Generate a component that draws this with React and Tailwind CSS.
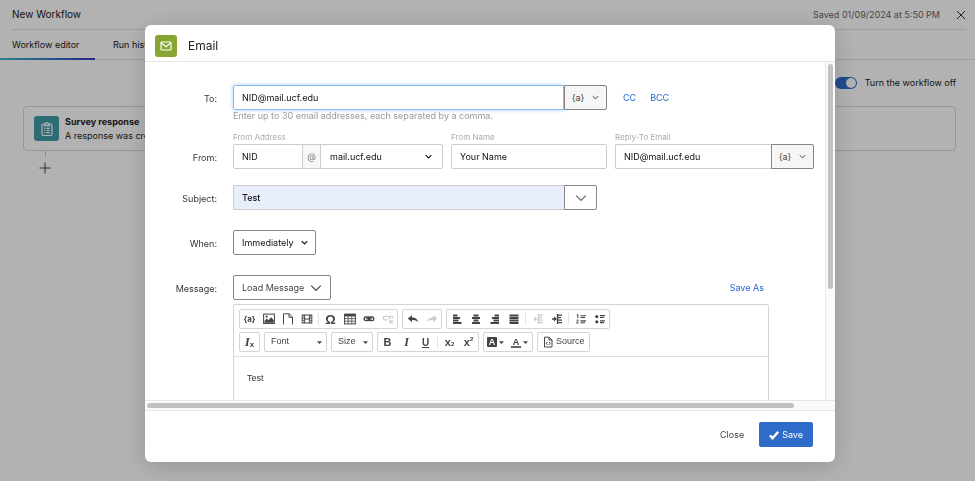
import { useState } from "react";

/* -------------------------------------------------------------------------- */
/*                                   icons                                    */
/* -------------------------------------------------------------------------- */

function Chevron({ className = "w-2 h-2", width = 1.6 }) {
  return (
    <svg className={`shrink-0 ${className}`} viewBox="0 0 10 10" fill="none" stroke="currentColor" strokeWidth={width}>
      <path d="M1 3l4 4 4-4" />
    </svg>
  );
}

function Caret({ className = "" }) {
  return (
    <svg className={`w-[5px] h-[5px] shrink-0 ${className}`} viewBox="0 0 8 8" fill="currentColor">
      <path d="M0 2h8L4 6.500z" />
    </svg>
  );
}

function Glyph({ children }) {
  return (
    <svg className="w-3 h-3" viewBox="0 0 12 12" fill="none" stroke="currentColor">
      {children}
    </svg>
  );
}

const icons = {
  image: (
    <Glyph>
      <rect x="0.6" y="1.1" width="10.8" height="9.4" />
      <path d="M1.5 9.8V8l2.3-2.4 1.8 1.6 2.6-3 2.5 3v2.6z" fill="currentColor" stroke="none" />
      <circle cx="3.6" cy="3.6" r="1.1" fill="currentColor" stroke="none" />
    </Glyph>
  ),
  file: (
    <Glyph>
      <path d="M1.5 11.5V.8h5.700l3.300 3.300v7.400M7 .8v3.500h3.500" />
    </Glyph>
  ),
  video: (
    <Glyph>
      <rect x="1.2" y="2" width="9.6" height="8" />
      <path d="M3.6 2v8M8.4 2v8M3.6 6h4.8" />
      <path d="M2.4 2.5v7M9.6 2.5v7" strokeDasharray="1.2 1" />
    </Glyph>
  ),
  table: (
    <Glyph>
      <rect x="0.6" y="1.1" width="10.8" height="9.8" />
      <path d="M.6 2.2h10.8" strokeWidth="2.4" />
      <path d="M.6 5.6h10.8M.6 8.2h10.8M4.2 3v8M7.8 3v8" strokeWidth="0.8" />
    </Glyph>
  ),
  link: (
    <Glyph>
      <rect x="1.2" y="4" width="5.4" height="3.6" rx="1.7" strokeWidth="1.4" />
      <rect x="5.4" y="4" width="5.4" height="3.6" rx="1.7" strokeWidth="1.4" />
      <path d="M3.2 5.8h5.6" strokeWidth="1.4" />
    </Glyph>
  ),
  unlink: (
    <Glyph>
      <path
        d="M5.5 6.8H3a1.7 1.7 0 0 1 0-3.4h3.4M6 5.1h3M7 3.4h2.500a1.6 1.6 0 0 1 1.500 1.600M7.2 7l3.6 3.6M10.8 7L7.2 10.6"
        strokeWidth="1.2"
      />
    </Glyph>
  ),
  undo: (
    <Glyph>
      <path d="M.8 5.6L5 2.2v2.2c3.6 0 5.6 1.6 6.2 5C9.8 7.5 8 6.9 5 7v2.2z" fill="currentColor" stroke="none" />
    </Glyph>
  ),
  redo: (
    <Glyph>
      <path d="M11.2 5.6L7 2.2v2.2C3.4 4.4 1.4 6 .8 9.4 2.2 7.5 4 6.9 7 7v2.2z" fill="currentColor" stroke="none" />
    </Glyph>
  ),
  alignLeft: (
    <Glyph>
      <path d="M2 2.5h4.5M2 5h7M2 7.5h5.5M2 10h8.5" strokeWidth="1.9" />
    </Glyph>
  ),
  alignCenter: (
    <Glyph>
      <path d="M3.500 2.500h5M2 5h8M3.500 7.500h5M2 10h8" strokeWidth="1.9" />
    </Glyph>
  ),
  alignRight: (
    <Glyph>
      <path d="M5.500 2.500h4.500M3 5h7M4.500 7.500h5.500M1.500 10h8.500" strokeWidth="1.9" />
    </Glyph>
  ),
  justify: (
    <Glyph>
      <path d="M1.500 2.500h9M1.500 5h9M1.500 7.500h9M1.500 10h9" strokeWidth="1.9" />
    </Glyph>
  ),
  outdent: (
    <Glyph>
      <path d="M6.5 1v10M7 2.2h4M7 4.7h3M7 7.2h4M7 9.7h4M3.5 6H6" strokeWidth="1.2" />
      <path d="M4.2 3.6L1.2 6l3 2.4z" fill="currentColor" stroke="none" />
    </Glyph>
  ),
  indent: (
    <Glyph>
      <path d="M6.5 1v10M7 2.2h4M7 4.7h3M7 7.2h4M7 9.7h4M1 6h2.5" strokeWidth="1.3" />
      <path d="M3 3.6L6 6 3 8.4z" fill="currentColor" stroke="none" />
    </Glyph>
  ),
  bullets: (
    <Glyph>
      <path d="M6 2.7h5M6 4.5h4M6 7.9h5M6 9.7h4" strokeWidth="1.2" />
      <circle cx="2.8" cy="3.6" r="1.6" fill="currentColor" stroke="none" />
      <circle cx="2.8" cy="8.8" r="1.6" fill="currentColor" stroke="none" />
    </Glyph>
  ),
  numbers: (
    <Glyph>
      <path d="M5.5 2.7h5.5M5.5 4.5h4.5M5.5 7.9h5.5M5.5 9.7h4.5" strokeWidth="1.1" />
      <path d="M1.8 2l1-.6v3.6M1.5 7.4c.6-.8 2-.5 1.8.4-.1.7-1.5 1.3-1.8 2.2h2" strokeWidth="1" />
    </Glyph>
  ),
  source: (
    <Glyph>
      <path d="M2.5 11V1.2h4.7L10 4v7zM7 1.2V4h3" />
      <path d="M5.4 5.9L4.2 7.3l1.2 1.5M7 5.9l1.2 1.4L7 8.8" />
    </Glyph>
  ),
};

/* -------------------------------------------------------------------------- */
/*                                  helpers                                   */
/* -------------------------------------------------------------------------- */

const inputBase = "h-full w-full min-w-0 px-2 outline-none";

function Field({ label, htmlFor, className = "", children }) {
  return (
    <div className={`flex items-end gap-4 ${className}`}>
      <label htmlFor={htmlFor} className="w-[72px] shrink-0 text-right text-[#333] h-[25px] leading-[27px]">
        {label}
      </label>
      <div className="flex-1 min-w-0">{children}</div>
    </div>
  );
}

function PipedTextButton() {
  return (
    <button
      type="button"
      aria-label="Insert piped text"
      className="w-[43px] shrink-0 flex items-center justify-center gap-2 border border-[#858585] bg-[#f6f6f6] rounded-r-xs text-[#444]"
    >
      {"{a}"}
      <Chevron className="w-[7px] h-[7px]" width={1.4} />
    </button>
  );
}

function Group({ children }) {
  return <div className="flex items-center h-5 border border-[#d4d4d4] rounded-xs">{children}</div>;
}

function Tool({ label, className = "", children }) {
  return (
    <button
      type="button"
      aria-label={label}
      className={`min-w-[19px] h-full flex items-center justify-center ${className}`}
    >
      {children}
    </button>
  );
}

function Separator() {
  return <span className="w-px h-3 mx-[2px] bg-[#e2e2e2]" />;
}

function Toolbar() {
  return (
    <div className="flex flex-col gap-[3px] px-[5px] py-1 border-b border-[#ddd] text-[#444]">
      <div className="flex gap-1">
        <Group>
          <Tool label="Piped text" className="text-[8px] font-bold">{"{a}"}</Tool>
          <Tool label="Image">{icons.image}</Tool>
          <Tool label="File">{icons.file}</Tool>
          <Tool label="Video">{icons.video}</Tool>
          <Separator />
          <Tool label="Special character" className="text-[13px] font-bold leading-none font-['Liberation_Sans',sans-serif]">Ω</Tool>
          <Tool label="Table">{icons.table}</Tool>
          <Tool label="Link">{icons.link}</Tool>
          <Tool label="Unlink" className="text-[#ccc]">{icons.unlink}</Tool>
        </Group>
        <Group>
          <Tool label="Undo">{icons.undo}</Tool>
          <Tool label="Redo" className="text-[#ccc]">{icons.redo}</Tool>
        </Group>
        <Group>
          <Tool label="Align left">{icons.alignLeft}</Tool>
          <Tool label="Center">{icons.alignCenter}</Tool>
          <Tool label="Align right">{icons.alignRight}</Tool>
          <Tool label="Justify">{icons.justify}</Tool>
          <Separator />
          <Tool label="Decrease indent" className="text-[#ccc]">{icons.outdent}</Tool>
          <Tool label="Increase indent">{icons.indent}</Tool>
          <Separator />
          <Tool label="Numbered list">{icons.numbers}</Tool>
          <Tool label="Bulleted list">{icons.bullets}</Tool>
        </Group>
      </div>

      <div className="flex gap-1 font-['Liberation_Sans',sans-serif]">
        <Group>
          <Tool label="Remove format" className="font-['Liberation_Serif',serif] text-[13px] font-bold italic">
            I<sub className="text-[8px] not-italic font-['Liberation_Sans',sans-serif] bottom-[-3px]">x</sub>
          </Tool>
        </Group>
        <Group>
          <span className="relative flex items-center">
            <select aria-label="Font" className="appearance-none w-[61px] pl-1.5 text-[9px] outline-none">
              <option>Font</option>
            </select>
            <Caret className="absolute right-1 pointer-events-none" />
          </span>
        </Group>
        <Group>
          <span className="relative flex items-center">
            <select aria-label="Size" className="appearance-none w-10 pl-1.5 text-[9px] outline-none">
              <option>Size</option>
            </select>
            <Caret className="absolute right-1 pointer-events-none" />
          </span>
        </Group>
        <Group>
          <Tool label="Bold" className="text-[11px] font-bold">B</Tool>
          <Tool label="Italic" className="text-[12px] font-bold italic font-['Liberation_Serif',serif]">I</Tool>
          <Tool label="Underline" className="text-[10px] font-bold underline">U</Tool>
          <Separator />
          <Tool label="Subscript" className="text-[11px] font-bold">
            x<sub className="text-[6px]">2</sub>
          </Tool>
          <Tool label="Superscript" className="text-[11px] font-bold">
            x<sup className="text-[6px]">2</sup>
          </Tool>
        </Group>
        <Group>
          <Tool label="Background color" className="gap-[2px] px-[3px] text-[9px] font-bold">
            <span className="bg-[#444] text-white w-[10px] h-[10px] leading-[10px] rounded-[1px]">A</span>
            <Caret />
          </Tool>
          <Tool label="Text color" className="gap-[2px] px-1 text-[9px] font-bold">
            <span className="w-[10px] h-[11px] leading-[10px] border-b-2 border-[#666]">A</span>
            <Caret />
          </Tool>
        </Group>
        <Group>
          <Tool label="Source" className="gap-[2px] px-1 text-[9px]">
            {icons.source}
            Source
          </Tool>
        </Group>
      </div>
    </div>
  );
}

/* -------------------------------------------------------------------------- */
/*                                   page                                     */
/* -------------------------------------------------------------------------- */

function WorkflowPage() {
  return (
    <div className="min-h-screen bg-white text-[#222]">
      <header className="flex items-center justify-between h-[30px] ml-3 mr-[9px] border-b border-[#e2e2e2]">
        <h1 className="text-[10px]">New Workflow</h1>
        <div className="flex items-center gap-4 text-[#666]">
          <span>Saved 01/09/2024 at 5:50 PM</span>
          <button type="button" aria-label="Close workflow">
            <svg className="w-[10px] h-[10px]" viewBox="0 0 10 10" stroke="#333" fill="none">
              <path d="M1 1l8 8M9 1L1 9" />
            </svg>
          </button>
        </div>
      </header>

      <nav className="flex h-[30px] border-b border-[#e2e2e2]">
        <a href="#editor" className="relative w-[95px] pl-3 leading-[30px]">
          Workflow editor
          <span className="absolute left-0 -bottom-px w-full h-[2px] bg-linear-to-r from-[#3bb8c8] to-[#3b2fc0]" />
        </a>
        <a href="#history" className="pl-[18px] leading-[30px]">Run history</a>
      </nav>

      <div className="pl-[23px] pr-[19px] pt-4">
        <label className="flex items-center justify-end gap-2 h-[14px]">
          <input type="checkbox" defaultChecked className="peer sr-only" />
          <span className="w-[22px] h-3 p-px flex justify-end rounded-full bg-[#2f6bd0]">
            <span className="w-[10px] h-[10px] rounded-full bg-white" />
          </span>
          Turn the workflow off
        </label>

        <div className="mt-4 h-[45px] flex items-center gap-[6px] pl-[10px] border border-[#d6d6d6] rounded-[4px]">
          <span className="w-[25px] h-[25px] shrink-0 flex items-center justify-center rounded-[3px] bg-[#419ba8] text-white">
            <svg className="w-4 h-4" viewBox="0 0 16 16" fill="none" stroke="currentColor" strokeWidth="1.2">
              <path d="M5.5 3H4.2C3.5 3 3 3.5 3 4.2v9.1c0 .7.5 1.2 1.2 1.2h7.6c.7 0 1.2-.5 1.2-1.2V4.2c0-.7-.5-1.2-1.2-1.2h-1.3" />
              <path d="M5.5 4.6V2.8h1.3a1.2 1.2 0 0 1 2.4 0h1.3v1.8zM7.3 7.3h3.4M7.3 9.5h3.4M7.3 11.7h3.4M5.2 7.3h1M5.2 9.5h1M5.2 11.7h1" />
            </svg>
          </span>
          <div className="leading-[14px]">
            <p className="font-bold">Survey response</p>
            <p>A response was created</p>
          </div>
        </div>

        <div className="w-11 flex flex-col items-center gap-[5px]">
          <span className="w-px h-[6px] bg-[#ccc]" />
          <button type="button" aria-label="Add step">
            <svg className="w-3 h-3" viewBox="0 0 12 12" stroke="#444" fill="none">
              <path d="M6 .5v11M.5 6h11" />
            </svg>
          </button>
        </div>
      </div>
    </div>
  );
}

function EmailForm() {
  const [to, setTo] = useState("NID@mail.ucf.edu");
  const [fromUser, setFromUser] = useState("NID");
  const [fromName, setFromName] = useState("Your Name");
  const [replyTo, setReplyTo] = useState("NID@mail.ucf.edu");
  const [subject, setSubject] = useState("Test");

  return (
    <form className="pt-[23px] pr-[11px] text-[#111]">
      {/* To */}
      <Field label="To:" htmlFor="to">
        <div className="grid grid-cols-[374fr_191fr] gap-4 items-center">
          <div className="flex h-[25px]">
            <input
              id="to"
              type="text"
              value={to}
              onChange={(e) => setTo(e.target.value)}
              className={`${inputBase} border border-[#8abaf0] rounded-l-xs shadow-[0_0_4px_#a9cdf5]`}
            />
            <PipedTextButton />
          </div>
          <div className="flex gap-[14px] text-[#2667d2]">
            <button type="button">CC</button>
            <button type="button">BCC</button>
          </div>
        </div>
      </Field>
      <p className="ml-[88px] h-[13px] leading-[12px] text-[#999]">
        Enter up to 30 email addresses, each separated by a comma.
      </p>

      {/* From */}
      <Field label="From:" htmlFor="from-user" className="mt-2">
        <div className="grid grid-cols-[210fr_156fr_199fr] gap-2">
          <div>
            <label htmlFor="from-user" className="block text-[8px] leading-[12px] pb-px text-[#aaa]">From Address</label>
            <div className="flex h-[25px] border border-[#ccc] rounded-xs">
              <input
                id="from-user"
                type="text"
                value={fromUser}
                onChange={(e) => setFromUser(e.target.value)}
                className="w-[68px] px-2 outline-none"
              />
              <span className="w-[19px] shrink-0 flex items-center justify-center border-x border-[#ccc] bg-[#f7f7f7] text-[#777]">@</span>
              <span className="relative flex-1 flex items-center">
                <select aria-label="From domain" className="appearance-none w-full h-full px-[9px] outline-none">
                  <option>mail.ucf.edu</option>
                </select>
                <Chevron className="absolute right-[10px] w-[7px] h-[7px] pointer-events-none" />
              </span>
            </div>
          </div>
          <div>
            <label htmlFor="from-name" className="block text-[8px] leading-[12px] pb-px text-[#aaa]">From Name</label>
            <div className="h-[25px]">
              <input
                id="from-name"
                type="text"
                value={fromName}
                onChange={(e) => setFromName(e.target.value)}
                className={`${inputBase} border border-[#ccc] rounded-xs`}
              />
            </div>
          </div>
          <div>
            <label htmlFor="reply-to" className="block text-[8px] leading-[12px] pb-px text-[#aaa]">Reply-To Email</label>
            <div className="flex h-[25px]">
              <input
                id="reply-to"
                type="text"
                value={replyTo}
                onChange={(e) => setReplyTo(e.target.value)}
                className={`${inputBase} border border-r-0 border-[#ccc] rounded-l-xs`}
              />
              <PipedTextButton />
            </div>
          </div>
        </div>
      </Field>

      {/* Subject */}
      <Field label="Subject:" htmlFor="subject" className="mt-4">
        <div className="grid grid-cols-[364fr_217fr]">
          <div className="flex h-[25px]">
            <input
              id="subject"
              type="text"
              value={subject}
              onChange={(e) => setSubject(e.target.value)}
              className={`${inputBase} border border-r-0 border-[#ccc] rounded-l-xs bg-[#e8eefc] font-medium`}
            />
            <button
              type="button"
              aria-label="Subject options"
              className="w-[33px] shrink-0 flex items-center justify-center border border-[#858585] rounded-r-xs text-[#666]"
            >
              <Chevron className="w-3 h-3" width={1} />
            </button>
          </div>
        </div>
      </Field>

      {/* When */}
      <Field label="When:" htmlFor="when" className="mt-5">
        <span className="relative inline-flex items-center align-top">
          <select
            id="when"
            className="appearance-none h-[25px] w-[83px] px-2 border border-[#858585] rounded-xs outline-none"
          >
            <option>Immediately</option>
          </select>
          <Chevron className="absolute right-2 w-[7px] h-[7px] pointer-events-none" />
        </span>
      </Field>

      {/* Message */}
      <Field label="Message:" htmlFor="load-message" className="mt-5">
        <div className="flex items-center justify-between pr-[50px]">
          <button
            id="load-message"
            type="button"
            className="h-[25px] w-[98px] px-2 flex items-center justify-between border border-[#858585] rounded-xs text-[#444]"
          >
            Load Message
            <Chevron className="w-3 h-3" width={1} />
          </button>
          <button type="button" className="text-[#2667d2]">Save As</button>
        </div>
      </Field>

      <div className="ml-[88px] mr-[45px] mt-1 border border-[#d4d4d4] rounded-xs">
        <Toolbar />
        <div
          contentEditable
          suppressContentEditableWarning
          role="textbox"
          aria-label="Message body"
          className="h-40 px-[13px] pt-[14px] text-[9px] leading-[14px] text-[#333] font-['Liberation_Sans',sans-serif] outline-none"
        >
          Test
        </div>
      </div>
    </form>
  );
}

function EmailDialog() {
  return (
    <div
      role="dialog"
      aria-label="Email"
      className="flex-1 min-w-0 flex flex-col bg-white rounded-md overflow-hidden shadow-[0_4px_24px_rgba(0,0,0,0.18)]"
    >
      <header className="h-[37px] shrink-0 flex items-center gap-[11px] pl-[10px] pt-[6px] border-b border-[#e6e6e6]">
        <span className="w-[22px] h-[22px] flex items-center justify-center rounded-[3px] bg-[#86a532] text-white">
          <svg className="w-3 h-3" viewBox="0 0 12 12" fill="none" stroke="currentColor" strokeWidth="1.2">
            <rect x="1" y="2" width="10" height="8" rx="1" />
            <path d="M1.5 3l4.5 3.8L10.5 3" />
          </svg>
        </span>
        <h2 className="text-[12px] text-[#222]">Email</h2>
      </header>

      <div className="flex-1 min-h-0 flex">
        <div className="flex-1 min-w-0 overflow-hidden">
          <EmailForm />
        </div>
        <div className="w-[10px] shrink-0 border-l border-[#e8e8e8] bg-[#fafafa] pl-[2px] pt-[2px]">
          <div className="w-[5px] h-[67%] rounded-full bg-[#c1c1c1]" />
        </div>
      </div>
      <div className="h-[11px] shrink-0 border-y border-[#e6e6e6] bg-[#fafafa] pl-[2px] pt-[2px]">
        <div className="h-[5px] w-[94%] rounded-full bg-[#c1c1c1]" />
      </div>

      <footer className="h-[51px] shrink-0 flex items-center justify-end gap-[15px] pr-[22px] pb-1">
        <button type="button" className="text-[#444]">Close</button>
        <button type="button" className="h-[25px] px-[10px] flex items-center gap-[3px] rounded-xs bg-[#2f6bc9] text-white">
          <svg className="w-[10px] h-[10px]" viewBox="0 0 10 10" fill="none" stroke="currentColor" strokeWidth="2.4">
            <path d="M.8 5.4l2.7 2.8L9.2 1.8" />
          </svg>
          Save
        </button>
      </footer>
    </div>
  );
}

export default function App() {
  return (
    <div className="font-[Inter,sans-serif] text-[9px]">
      <WorkflowPage />
      <div className="fixed inset-0 flex pl-[145px] pr-35 pt-[25px] pb-[19px] bg-black/30">
        <EmailDialog />
      </div>
    </div>
  );
}
